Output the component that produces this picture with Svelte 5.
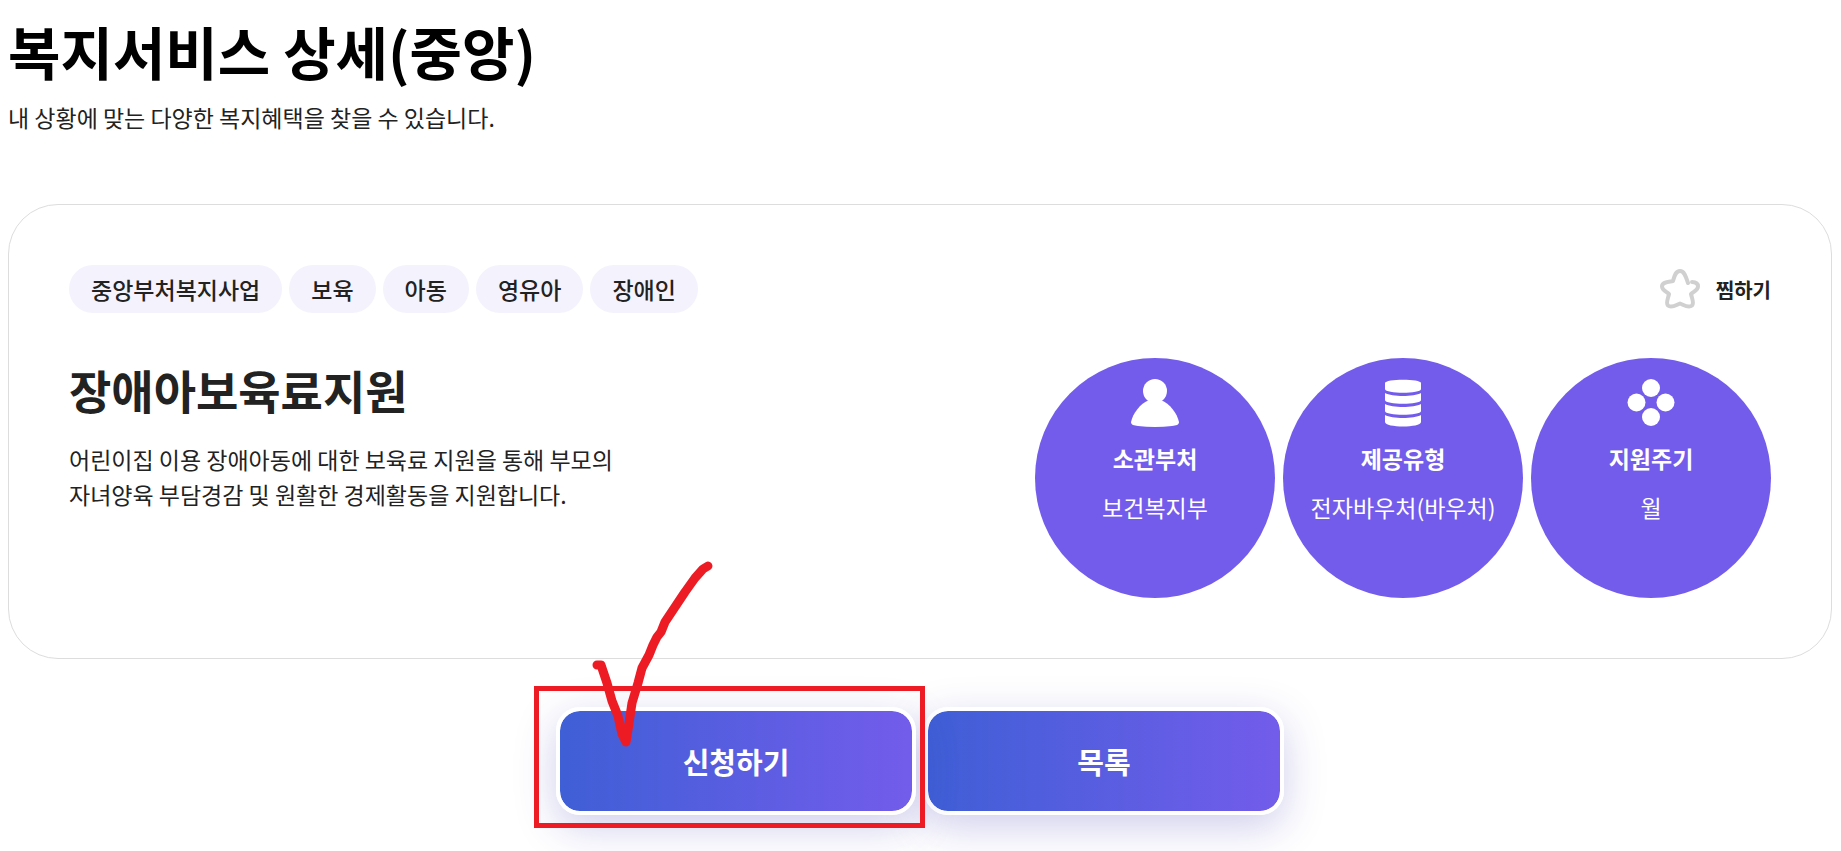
<script>
	const tags = ['중앙부처복지사업', '보육', '아동', '영유아', '장애인']

	const facts = [
		{ icon: 'person', label: '소관부처', value: '보건복지부' },
		{ icon: 'coins', label: '제공유형', value: '전자바우처(바우처)' },
		{ icon: 'dots', label: '지원주기', value: '월' }
	]
</script>

<main>
	<header>
		<h1>복지서비스 상세(중앙)</h1>
		<p>내 상황에 맞는 다양한 복지혜택을 찾을 수 있습니다.</p>
	</header>

	<section class="card">
		<div class="top">
			<ul class="tags">
				{#each tags as tag}
					<li>{tag}</li>
				{/each}
			</ul>
			<button class="favorite" type="button">
				<svg viewBox="0 0 40 40" aria-hidden="true">
					<path
						d="M28 14 C26 8 24.5 2 20 2 C15.500 2 14.500 7 13 12 C8 13 2 13 2 17.500 C2 21 6 22.500 9 25 C8 30 5.500 34 8 36.500 C11.500 39.500 16 36 20 34.500 C24 36 28.500 39.500 32 36.500 C34.500 34 32 30 31 25 C34 22.500 38 21 38 17.500 C38 13.500 35 13 32 13" />
				</svg>
				<span>찜하기</span>
			</button>
		</div>

		<div class="body">
			<div class="summary">
				<h2>장애아보육료지원</h2>
				<p>
					어린이집 이용 장애아동에 대한 보육료 지원을 통해 부모의<br />
					자녀양육 부담경감 및 원활한 경제활동을 지원합니다.
				</p>
			</div>

			<dl class="facts">
				{#each facts as fact}
					<div class="fact">
						<svg viewBox="0 0 48 48" aria-hidden="true">
							{#if fact.icon === 'person'}
								<circle cx="24" cy="12" r="12" />
								<path
									d="M18 21 H30 C39 25 46 34 48 43 C48 46 45 46.500 41 47 C30 48.300 18 48.300 7 47 C3 46.500 0 46 0 43 C2 34 9 25 18 21 Z" />
							{:else if fact.icon === 'coins'}
								<path
									d="M6 4 C6 -0.500 42 -0.500 42 4 V10 C42 15 6 15 6 10 Z" />
								<path
									d="M6 14 C13 18 35 18 42 14 V21 C42 26 6 26 6 21 Z" />
								<path
									d="M6 25 C13 29 35 29 42 25 V32 C42 37 6 37 6 32 Z" />
								<path
									d="M6 36 C13 40 35 40 42 36 V43 C42 49 6 49 6 43 Z" />
							{:else}
								<circle cx="24" cy="9" r="9" />
								<circle cx="9.500" cy="23.500" r="9" />
								<circle cx="38.500" cy="23.500" r="9" />
								<circle cx="24" cy="38" r="9" />
							{/if}
						</svg>
						<dt>{fact.label}</dt>
						<dd>{fact.value}</dd>
					</div>
				{/each}
			</dl>
		</div>
	</section>

	<div class="actions">
		<div class="marked">
			<button class="action" type="button">신청하기</button>
			<!-- hand-drawn highlight on top of the apply button -->
			<svg class="mark" viewBox="0 0 391 272" aria-hidden="true">
				<rect x="2.5" y="132.5" width="386" height="137" />
				<path
					d="M63 109 L67 109 L73 127 L78 145 L84 160 L88 178 L92 186 L93 180 L95 167 L98 147 L104 127 L108 112 L115 99 L119 89 L123 81 L127 76 L131 66 L141 51 L151 36 L161 22 L169 13 L174 10" />
			</svg>
		</div>
		<button class="action" type="button">목록</button>
	</div>
</main>

<style>
	:global(body) {
		margin: 0;
		background: #fff;
	}

	main {
		padding: 10px 9px 36px 8px;
		color: #222;
		font-family: 'Noto Sans CJK KR', sans-serif;
		font-size: 23px;
		line-height: 35px;
	}

	h1,
	h2,
	p,
	ul,
	dl,
	dd {
		margin: 0;
		padding: 0;
	}

	h1 {
		color: #000;
		font-size: 57px;
		font-weight: 700;
		line-height: 80px;
	}

	header p {
		margin-top: 10px;
	}

	.card {
		margin-top: 69px;
		padding: 60px;
		border: 1px solid #ddd;
		border-radius: 50px;
	}

	.top {
		display: flex;
		align-items: center;
		justify-content: space-between;
	}

	.tags {
		display: flex;
		flex-wrap: wrap;
		gap: 7px;
		list-style: none;
	}

	.tags li {
		padding: 0 22px;
		border-radius: 24px;
		background: #f4f2fc;
		font-weight: 500;
		line-height: 48px;
	}

	button {
		font-family: inherit;
		cursor: pointer;
	}

	.favorite {
		display: flex;
		align-items: center;
		gap: 16px;
		padding: 0;
		border: 0;
		background: none;
		color: #222;
		font-size: 20px;
		font-weight: 700;
	}

	.favorite svg {
		width: 40px;
		height: 40px;
		fill: none;
		stroke: #d0d0d0;
		stroke-width: 4;
		stroke-linecap: round;
		stroke-linejoin: round;
	}

	.body {
		display: flex;
		justify-content: space-between;
		margin-top: 45px;
	}

	h2 {
		font-size: 46px;
		font-weight: 700;
		line-height: 62px;
	}

	.summary p {
		margin-top: 22px;
	}

	.facts {
		display: flex;
		gap: 8px;
	}

	.fact {
		box-sizing: border-box;
		width: 240px;
		height: 240px;
		padding-top: 21px;
		border-radius: 50%;
		background: #735ceb;
		color: #fff;
		text-align: center;
		white-space: nowrap;
	}

	.fact svg {
		display: block;
		width: 48px;
		height: 48px;
		margin: 0 auto 14px;
		fill: #fff;
	}

	dt {
		font-weight: 700;
	}

	dd {
		margin-top: 14px;
	}

	.actions {
		display: flex;
		justify-content: center;
		gap: 8px;
		margin-top: 48px;
	}

	.marked {
		position: relative;
	}

	.action {
		width: 360px;
		height: 108px;
		padding: 0;
		border: 4px solid #fff;
		border-radius: 24px;
		background: linear-gradient(90deg, #3f5fd6, #735ceb) padding-box;
		box-shadow: 0 12px 40px rgba(63, 60, 180, 0.25);
		color: #fff;
		font-size: 29px;
		font-weight: 700;
	}

	.mark {
		position: absolute;
		right: -9px;
		bottom: -13px;
		width: 391px;
		height: 272px;
		fill: none;
		stroke: #ed1c24;
		pointer-events: none;
		z-index: 1;
	}

	.mark rect {
		stroke-width: 5;
	}

	.mark path {
		stroke-width: 9;
		stroke-linecap: round;
		stroke-linejoin: round;
	}
</style>
